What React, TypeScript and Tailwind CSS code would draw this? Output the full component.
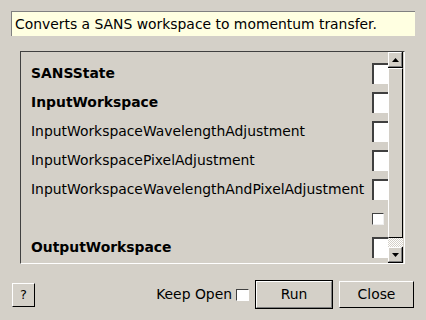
import React from "react";

const rows = [
  { name: "SANSState", bold: true, kind: "edit" },
  { name: "InputWorkspace", bold: true, kind: "edit" },
  { name: "InputWorkspaceWavelengthAdjustment", bold: false, kind: "edit" },
  { name: "InputWorkspacePixelAdjustment", bold: false, kind: "edit" },
  { name: "InputWorkspaceWavelengthAndPixelAdjustment", bold: false, kind: "edit" },
  { name: "", bold: false, kind: "check" },
  { name: "OutputWorkspace", bold: true, kind: "edit" },
];

function Arrow({ up }: { up: boolean }) {
  return (
    <svg width="7" height="4" viewBox="0 0 7 4">
      {up ? <polygon points="0,4 7,4 3.5,0" fill="#000" /> : <polygon points="0,0 7,0 3.5,4" fill="#000" />}
    </svg>
  );
}

function ScrollButton({ up }: { up: boolean }) {
  return (
    <div className="h-[16px] w-[15px] shrink-0 border-r border-b border-black bg-[#d4d0c8]">
      <div className="flex h-full w-full items-center justify-center border-t border-l border-white border-r border-b border-r-[#808080] border-b-[#808080]">
        <Arrow up={up} />
      </div>
    </div>
  );
}

export default function App() {
  return (
    <div
      className="flex h-[320px] w-[426px] flex-col bg-[#d4d0c8] text-[13.9px] text-black"
      style={{ fontFamily: '"DejaVu Sans", sans-serif' }}
    >
      {/* description */}
      <div className="mx-[11px] mt-[11px] flex h-[25px] items-center border-t border-l border-[#808080] border-r-white border-b-white bg-[#ffffe1] pl-[3px]">
        Converts a SANS workspace to momentum transfer.
      </div>

      {/* property panel */}
      <div className="ml-[20px] mt-[15px] flex h-[213px] w-[385px] border-t border-l border-[#404040] border-r border-b border-r-white border-b-white">
        <div className="w-[367px] overflow-hidden pt-[7px]">
          {rows.map((row, i) => (
            <div key={i} className="flex h-[29px] items-center">
              <div className={`w-[351px] shrink-0 pl-[10px] whitespace-nowrap ${row.bold ? "font-bold" : ""}`}>{row.name}</div>
              {row.kind === "edit" ? (
                <div className="h-[21px] w-[40px] shrink-0 border-t-2 border-l-2 border-[#404040] bg-white" />
              ) : (
                <div className="h-[12px] w-[12px] shrink-0 border-t border-l border-[#404040] border-r border-b border-r-[#f0f0f0] border-b-[#f0f0f0] bg-white" />
              )}
            </div>
          ))}
        </div>
        <div className="flex w-[16px] flex-col">
          <ScrollButton up={true} />
          <div className="h-[170px] w-[15px] border-t border-l border-white border-r border-b border-r-black border-b-black bg-[#d4d0c8]" />
          <div className="w-[15px] flex-1 bg-[repeating-conic-gradient(#ffffff_0_25%,#d4d0c8_0_50%)] bg-[length:2px_2px]" />
          <ScrollButton up={false} />
        </div>
      </div>

      {/* bottom buttons */}
      <div className="mt-[16px] flex items-center pl-[12px] pr-[12px]">
        <div className="flex h-[24px] w-[23px] items-center justify-center border-t border-l border-white border-r border-b border-r-black border-b-black text-[13px]">
          ?
        </div>
        <div className="ml-auto flex items-center">
          <span>Keep Open</span>
          <div className="ml-[4px] h-[12px] w-[13px] border-t border-l border-[#404040] border-r border-b border-r-white border-b-white bg-white" />
          <div className="ml-[6px] flex h-[29px] w-[78px] items-center justify-center border border-black">
            <div className="flex h-full w-full items-center justify-center border-t border-l border-white border-r border-b border-r-[#808080] border-b-[#808080]">
              Run
            </div>
          </div>
          <div className="ml-[6px] flex h-[27px] w-[75px] items-center justify-center border-t border-l border-white border-r border-b border-r-black border-b-black">
            Close
          </div>
        </div>
      </div>
    </div>
  );
}
